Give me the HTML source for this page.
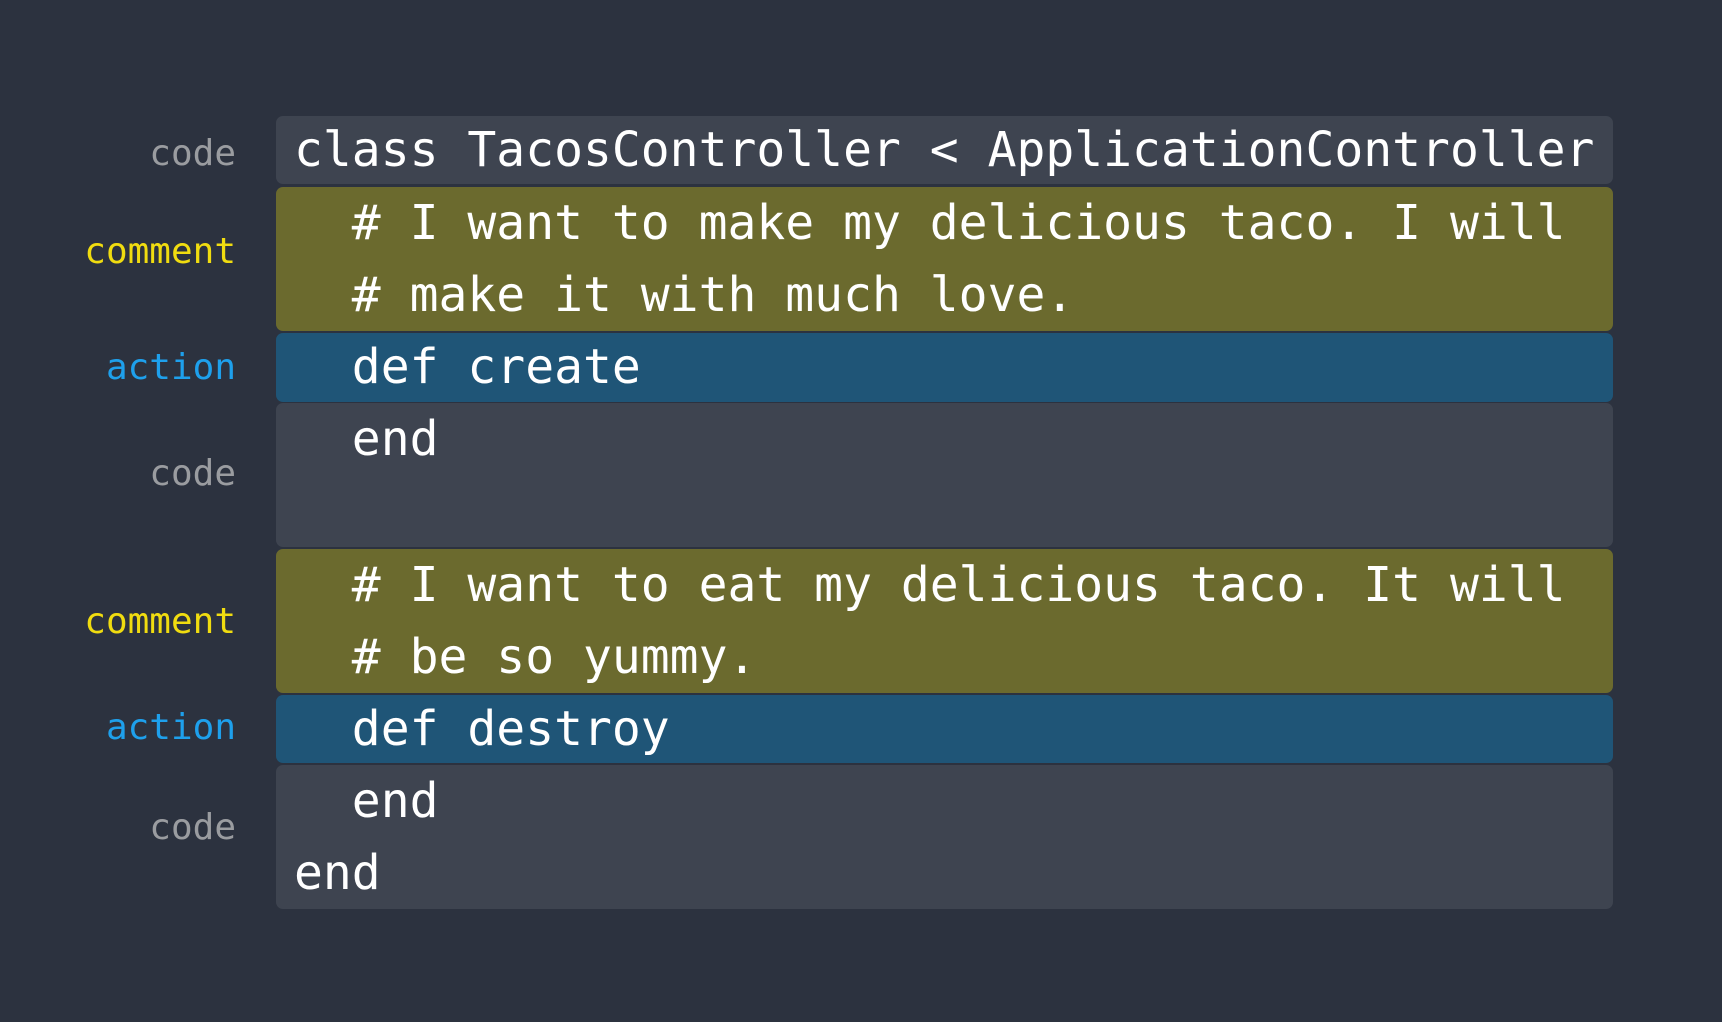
<!DOCTYPE html>
<html><head><meta charset="utf-8"><style>
html,body{margin:0;padding:0;background:#2c323f;width:1722px;height:1022px;overflow:hidden}
.r{position:absolute;left:276px;width:1337px;border-radius:7px;font-family:"DejaVu Sans Mono","Liberation Mono",monospace;font-size:48px;line-height:72px;color:#fff;white-space:pre;padding-left:18px;box-sizing:border-box}
.c{background:#3e4450}.m{background:#6b6a2e}.a{background:#1f5577}
.l{position:absolute;right:1486px;font-family:"DejaVu Sans Mono","Liberation Mono",monospace;font-size:36px;line-height:40px;transform:translateY(-50%)}
.lc{color:#9a9ca0}.lm{color:#f0dc10}.la{color:#1ea0ec}
</style></head><body>
<div class="r c" style="top:116px;height:68px;line-height:68px">class TacosController &lt; ApplicationController</div>
<div class="r m" style="top:187px;height:144px">  # I want to make my delicious taco. I will
  # make it with much love.</div>
<div class="r a" style="top:333px;height:69px;line-height:69px">  def create</div>
<div class="r c" style="top:403px;height:144px">  end</div>
<div class="r m" style="top:549px;height:144px">  # I want to eat my delicious taco. It will
  # be so yummy.</div>
<div class="r a" style="top:695px;height:68px;line-height:68px">  def destroy</div>
<div class="r c" style="top:765px;height:144px">  end
end</div>
<div class="l lc" style="top:154px">code</div>
<div class="l lm" style="top:252px">comment</div>
<div class="l la" style="top:368px">action</div>
<div class="l lc" style="top:474px">code</div>
<div class="l lm" style="top:622px">comment</div>
<div class="l la" style="top:728px">action</div>
<div class="l lc" style="top:828px">code</div>
</body></html>
